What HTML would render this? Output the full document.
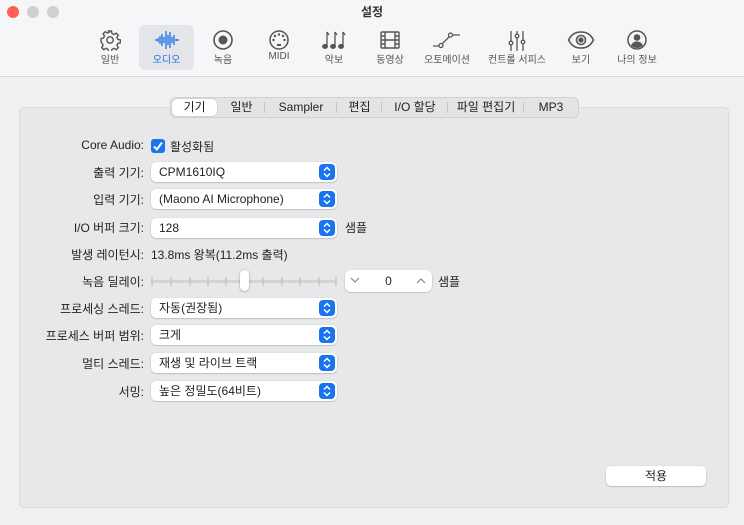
<!DOCTYPE html>
<html><head><meta charset="utf-8"><style>
*{margin:0;padding:0;box-sizing:border-box}
body{width:744px;height:525px;background:#eff0f2;font-family:"Liberation Sans","Noto Sans CJK KR",sans-serif;font-size:12px;color:#222;position:relative;overflow:hidden}
.hdr{position:absolute;left:0;top:0;width:744px;height:77px;background:#f5f6f8;border-bottom:1px solid #d6d6d8}
.dot{position:absolute;top:6px;width:12px;height:12px;border-radius:50%}
.title{position:absolute;top:3px;left:0;width:744px;text-align:center;font-size:12px;font-weight:bold;color:#333}
.tb{position:absolute;top:25px;height:45px;text-align:center;font-size:10px;color:#555}
.tb svg{position:absolute;left:50%;top:4px;transform:translateX(-50%)}
.tb span{position:absolute;left:0;right:0;top:26px;white-space:nowrap}
.sel{background:#e4e5e8;border-radius:6px}
.panel{position:absolute;left:19px;top:107px;width:710px;height:401px;background:#e7e8ea;border:1px solid #dadbdd;border-radius:5px}
.seg{position:absolute;left:170px;top:97px;width:409px;height:21px;background:#e3e4e6;border:1px solid #d0d1d3;border-radius:6px;font-size:12px}
.seg div{position:absolute;top:1px;height:17px;line-height:17px;text-align:center}
.seg .on{background:#fff;border-radius:5px;box-shadow:0 0 1px rgba(0,0,0,.4)}
.seg i{position:absolute;top:4px;width:1px;height:11px;background:#c8c8ca}
.lbl{position:absolute;right:600px;font-size:12px;text-align:right;white-space:nowrap}
.pop{position:absolute;left:151px;width:186px;height:20px;background:#fff;border-radius:5px;box-shadow:0 0.5px 1.5px rgba(0,0,0,.3);font-size:12px;line-height:20px;padding-left:8px}
.pop b{position:absolute;right:2px;top:2px;width:16px;height:16px;background:#1a74f0;border-radius:4px}
.pop b svg{position:absolute;left:4px;top:2px}
.t{position:absolute;font-size:12px;white-space:nowrap}
</style></head><body>
<div class="hdr">
<div class="dot" style="left:7px;background:#fe5f57"></div>
<div class="dot" style="left:27px;background:#d0d0d2"></div>
<div class="dot" style="left:47px;background:#d0d0d2"></div>
<div class="title">설정</div>
<div class="tb" style="left:86px;width:48px"><svg width="22" height="22" viewBox="0 0 22 22" fill="none" stroke="#555" stroke-width="1.4"><circle cx="11" cy="11" r="3.2"/><path d="M9.5 2h3l.5 2.5 2 1 2.2-1.4 2.1 2.1-1.4 2.2 1 2 2.5.5v3l-2.5.5-1 2 1.4 2.2-2.1 2.1-2.2-1.4-2 1-.5 2.5h-3l-.5-2.5-2-1-2.2 1.4-2.1-2.1 1.4-2.2-1-2L2 12.5v-3l2.5-.5 1-2-1.4-2.2 2.1-2.1 2.2 1.4 2-1z"/></svg><span>일반</span></div>
<div class="tb sel" style="left:139px;width:55px;color:#1a6fe8"><svg width="26" height="22" viewBox="0 0 26 22" stroke="#1a6fe8" stroke-width="1.3"><path d="M1 11h3M4 9v4M6 7v8M8 5v12M10 8v6M12 2v18M14 6v10M16 3v16M18 8v6M20 6v10M22 10v2M22 11h3"/></svg><span>오디오</span></div>
<div class="tb" style="left:199px;width:48px"><svg width="22" height="22" viewBox="0 0 22 22"><circle cx="11" cy="11" r="9" fill="none" stroke="#555" stroke-width="1.6"/><circle cx="11" cy="11" r="4.5" fill="#555"/></svg><span>녹음</span></div>
<div class="tb" style="left:255px;width:48px"><svg width="22" height="22" viewBox="0 0 22 22" fill="#555"><circle cx="11" cy="11" r="9" fill="none" stroke="#555" stroke-width="1.5"/><circle cx="5.5" cy="11" r="1.2"/><circle cx="7" cy="7" r="1.2"/><circle cx="11" cy="5.5" r="1.2"/><circle cx="15" cy="7" r="1.2"/><circle cx="16.5" cy="11" r="1.2"/><rect x="9" y="15" width="4" height="2"/></svg><span>MIDI</span></div>
<div class="tb" style="left:310px;width:48px"><svg width="26" height="22" viewBox="0 0 26 22" stroke="#555" stroke-width="1.3" fill="#555"><path d="M6 3v14M14 3v14M22 3v14" fill="none"/><ellipse cx="4" cy="17.5" rx="2.3" ry="1.8"/><ellipse cx="12" cy="17.5" rx="2.3" ry="1.8"/><ellipse cx="20" cy="17.5" rx="2.3" ry="1.8"/><path d="M6 3l2 3M14 3l2 3M22 3l2 3" fill="none"/></svg><span>악보</span></div>
<div class="tb" style="left:366px;width:48px"><svg width="22" height="22" viewBox="0 0 22 22" fill="none" stroke="#555" stroke-width="1.4"><rect x="2" y="3" width="18" height="16" rx="1"/><path d="M6 3v16M16 3v16M6 11h10M2 7h4M2 11h4M2 15h4M16 7h4M16 11h4M16 15h4"/></svg><span>동영상</span></div>
<div class="tb" style="left:420px;width:54px"><svg width="30" height="22" viewBox="0 0 30 22" fill="none" stroke="#555" stroke-width="1.3"><path d="M1 17h6M20 6h8M10 15l7-7"/><circle cx="9" cy="16.5" r="2"/><circle cx="18.5" cy="6" r="2"/></svg><span>오토메이션</span></div>
<div class="tb" style="left:484px;width:66px"><svg width="22" height="22" viewBox="0 0 22 22" fill="none" stroke="#555" stroke-width="1.3"><path d="M5 2v20M11 2v20M17 2v20"/><circle cx="5" cy="14" r="1.8" fill="#f5f6f8"/><circle cx="11" cy="7" r="1.8" fill="#f5f6f8"/><circle cx="17" cy="13" r="1.8" fill="#f5f6f8"/></svg><span>컨트롤 서피스</span></div>
<div class="tb" style="left:557px;width:48px"><svg width="28" height="22" viewBox="0 0 28 22" fill="none" stroke="#555" stroke-width="1.6"><path d="M1.5 11C5 4.5 9 3 14 3s9 1.5 12.5 8C23 17.5 19 19 14 19S5 17.5 1.5 11z"/><circle cx="14" cy="11" r="4.5"/><circle cx="14" cy="11" r="1.8" fill="#555"/></svg><span>보기</span></div>
<div class="tb" style="left:613px;width:48px"><svg width="22" height="22" viewBox="0 0 22 22"><circle cx="11" cy="11" r="9" fill="none" stroke="#555" stroke-width="1.5"/><circle cx="11" cy="8.5" r="3.3" fill="#555"/><path d="M5 16.5c1.5-3 3.5-4 6-4s4.5 1 6 4c-1.5 1.5-3.5 2.5-6 2.5s-4.5-1-6-2.5z" fill="#555"/></svg><span>나의 정보</span></div>
</div>

<div class="panel"></div>
<div class="seg">
<div class="on" style="left:1px;width:45px">기기</div>
<div style="left:47px;width:47px">일반</div><i style="left:93px"></i>
<div style="left:94px;width:72px">Sampler</div><i style="left:165px"></i>
<div style="left:166px;width:45px">편집</div><i style="left:210px"></i>
<div style="left:211px;width:66px">I/O 할당</div><i style="left:276px"></i>
<div style="left:277px;width:76px">파일 편집기</div><i style="left:352px"></i>
<div style="left:353px;width:54px">MP3</div>
</div>

<div class="lbl" style="top:138px">Core Audio:</div>
<div style="position:absolute;left:151px;top:139px;width:14px;height:14px;background:#1a74f0;border-radius:3px"><svg width="14" height="14" viewBox="0 0 14 14"><path d="M3 7.5l2.8 3L11 3.5" fill="none" stroke="#fff" stroke-width="2"/></svg></div>
<div class="t" style="left:170px;top:138px">활성화됨</div>

<div class="lbl" style="top:164px">출력 기기:</div>
<div class="pop" style="top:162px">CPM1610IQ<b><svg width="8" height="12" viewBox="0 0 8 12" fill="none" stroke="#fff" stroke-width="1.5"><path d="M1 4.5l3-3 3 3M1 7.5l3 3 3-3"/></svg></b></div>
<div class="lbl" style="top:191px">입력 기기:</div>
<div class="pop" style="top:189px">(Maono AI Microphone)<b><svg width="8" height="12" viewBox="0 0 8 12" fill="none" stroke="#fff" stroke-width="1.5"><path d="M1 4.5l3-3 3 3M1 7.5l3 3 3-3"/></svg></b></div>
<div class="lbl" style="top:219px">I/O 버퍼 크기:</div>
<div class="pop" style="top:218px">128<b><svg width="8" height="12" viewBox="0 0 8 12" fill="none" stroke="#fff" stroke-width="1.5"><path d="M1 4.5l3-3 3 3M1 7.5l3 3 3-3"/></svg></b></div>
<div class="t" style="left:345px;top:219px">샘플</div>

<div class="lbl" style="top:246px">발생 레이턴시:</div>
<div class="t" style="left:151px;top:246px">13.8ms 왕복(11.2ms 출력)</div>

<div class="lbl" style="top:273px">녹음 딜레이:</div>
<div style="position:absolute;left:151px;top:280px;width:185px;height:3px;background:#d3d4d6;border-radius:2px"></div>
<svg style="position:absolute;left:150px;top:276px" width="190" height="12"><g stroke="#b8b9bb" stroke-width="1"><path d="M2 1v9M21 1v9M40 1v9M58 1v9M76 1v9M113 1v9M132 1v9M150 1v9M169 1v9M186 1v9"/></g></svg>
<div style="position:absolute;left:240px;top:270px;width:9px;height:21px;background:#fff;border-radius:5px;box-shadow:0 0.5px 2px rgba(0,0,0,.35)"></div>
<div style="position:absolute;left:345px;top:270px;width:87px;height:22px;background:#fff;border-radius:6px;box-shadow:0 0.5px 1.5px rgba(0,0,0,.3)">
<svg style="position:absolute;left:5px;top:7px" width="10" height="7"><path d="M1 1l4 4 4-4" fill="none" stroke="#888" stroke-width="1.2"/></svg>
<div style="position:absolute;left:0;width:87px;text-align:center;top:4px">0</div>
<svg style="position:absolute;right:6px;top:7px" width="10" height="7"><path d="M1 6l4-4 4 4" fill="none" stroke="#888" stroke-width="1.2"/></svg>
</div>
<div class="t" style="left:438px;top:273px">샘플</div>

<div class="lbl" style="top:300px">프로세싱 스레드:</div>
<div class="pop" style="top:298px">자동(권장됨)<b><svg width="8" height="12" viewBox="0 0 8 12" fill="none" stroke="#fff" stroke-width="1.5"><path d="M1 4.5l3-3 3 3M1 7.5l3 3 3-3"/></svg></b></div>
<div class="lbl" style="top:327px">프로세스 버퍼 범위:</div>
<div class="pop" style="top:325px">크게<b><svg width="8" height="12" viewBox="0 0 8 12" fill="none" stroke="#fff" stroke-width="1.5"><path d="M1 4.5l3-3 3 3M1 7.5l3 3 3-3"/></svg></b></div>
<div class="lbl" style="top:355px">멀티 스레드:</div>
<div class="pop" style="top:353px">재생 및 라이브 트랙<b><svg width="8" height="12" viewBox="0 0 8 12" fill="none" stroke="#fff" stroke-width="1.5"><path d="M1 4.5l3-3 3 3M1 7.5l3 3 3-3"/></svg></b></div>
<div class="lbl" style="top:383px">서밍:</div>
<div class="pop" style="top:381px">높은 정밀도(64비트)<b><svg width="8" height="12" viewBox="0 0 8 12" fill="none" stroke="#fff" stroke-width="1.5"><path d="M1 4.5l3-3 3 3M1 7.5l3 3 3-3"/></svg></b></div>

<div style="position:absolute;left:606px;top:466px;width:100px;height:20px;background:#fff;border-radius:5px;box-shadow:0 0.5px 1.5px rgba(0,0,0,.3);text-align:center;line-height:20px;font-size:12px">적용</div>
</body></html>
